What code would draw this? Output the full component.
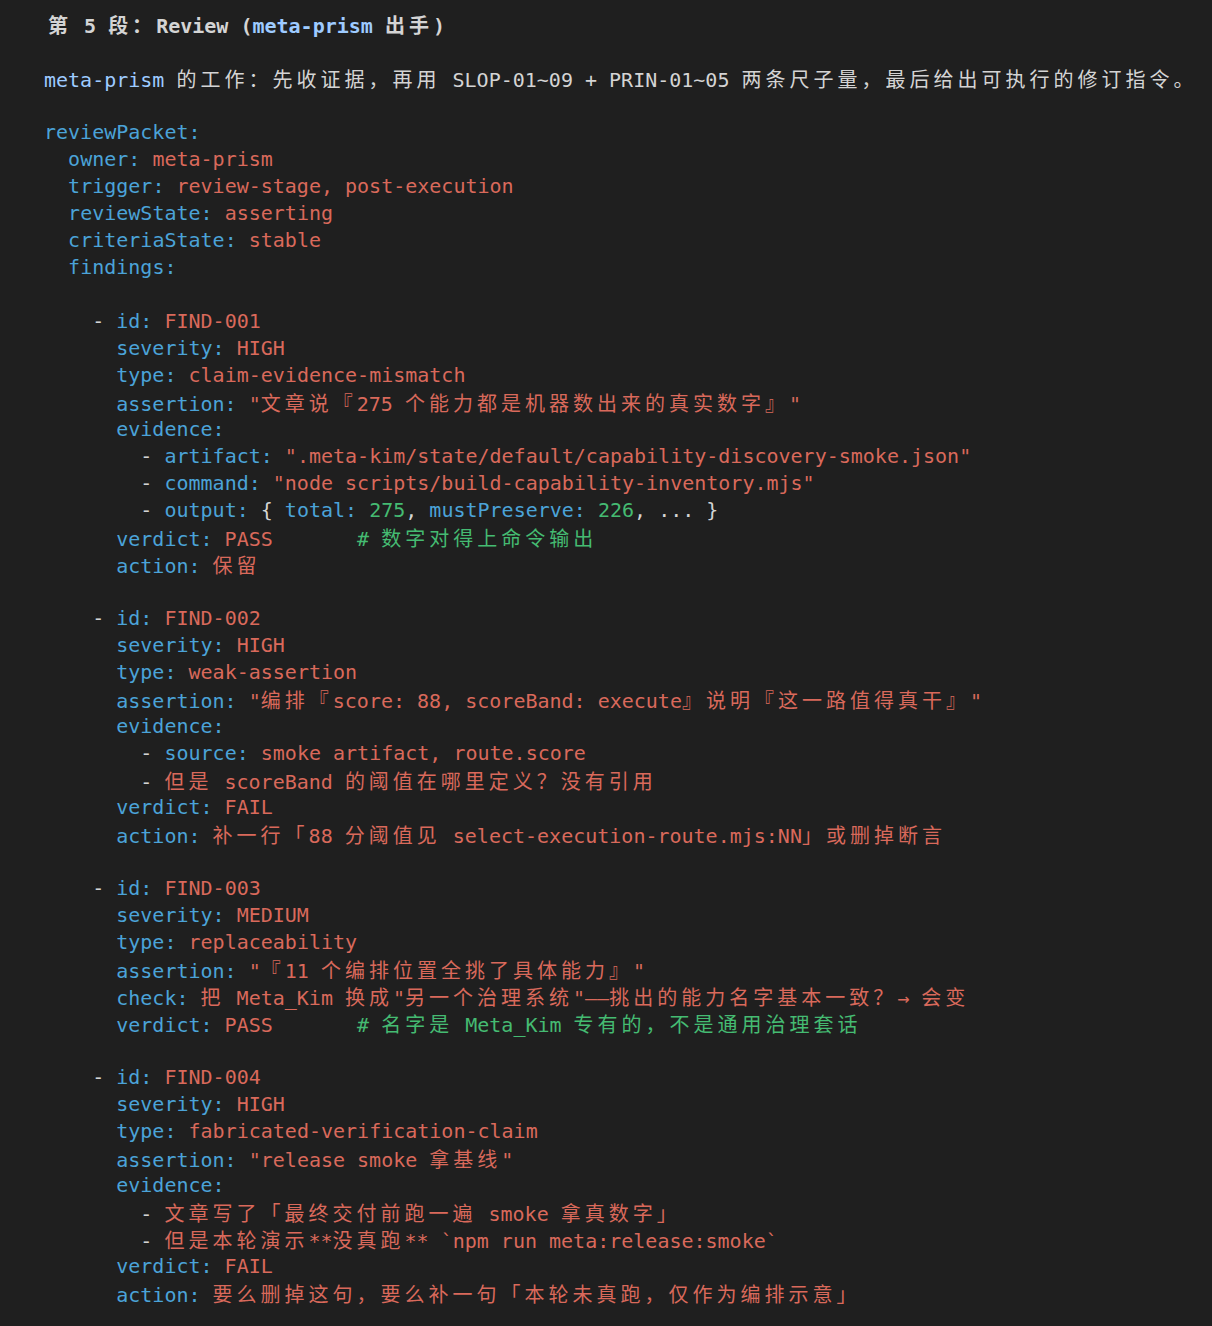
import React from "react";

type Seg = [string, string];

// colour shortcuts for the yaml-ish listing
const K = "text-[#4ba3d8]"; // keys
const V = "text-[#d9695b]"; // values / strings
const G = "text-[#45bb72]"; // numbers & comments
const W = "text-[#d4d4d4]"; // punctuation / plain
const B = "text-[#9ecbff]"; // inline code in prose

const CJK = /([\u2e80-\u9fff\uf900-\ufaff\uff00-\uffef\u3000-\u303f]+)/;

const key = (indent: number, k: string, v: string, dash = false): Seg[] => {
  const out: Seg[] = [[W, " ".repeat(indent)]];
  if (dash) out.push([W, "- "]);
  out.push([K, k + ":"]);
  if (v) out.push([V, " " + v]);
  return out;
};

const lines: Seg[][] = [
  [],
  [],
  [
    [B, "meta-prism"],
    [W, " 的工作：先收证据，再用 SLOP-01~09 + PRIN-01~05 两条尺子量，最后给出可执行的修订指令。"],
  ],
  [],
  key(0, "reviewPacket", ""),
  key(2, "owner", "meta-prism"),
  key(2, "trigger", "review-stage, post-execution"),
  key(2, "reviewState", "asserting"),
  key(2, "criteriaState", "stable"),
  key(2, "findings", ""),
  [],
  // FIND-001
  key(4, "id", "FIND-001", true),
  key(6, "severity", "HIGH"),
  key(6, "type", "claim-evidence-mismatch"),
  key(6, "assertion", "\"文章说『275 个能力都是机器数出来的真实数字』\""),
  key(6, "evidence", ""),
  key(8, "artifact", "\".meta-kim/state/default/capability-discovery-smoke.json\"", true),
  key(8, "command", "\"node scripts/build-capability-inventory.mjs\"", true),
  [
    [W, "        - "],
    [K, "output:"],
    [W, " { "],
    [K, "total:"],
    [G, " 275"],
    [W, ", "],
    [K, "mustPreserve:"],
    [G, " 226"],
    [W, ", ... }"],
  ],
  [...key(6, "verdict", "PASS"), [W, "       "], [G, "# 数字对得上命令输出"]],
  key(6, "action", "保留"),
  [],
  // FIND-002
  key(4, "id", "FIND-002", true),
  key(6, "severity", "HIGH"),
  key(6, "type", "weak-assertion"),
  key(6, "assertion", "\"编排『score: 88, scoreBand: execute』说明『这一路值得真干』\""),
  key(6, "evidence", ""),
  key(8, "source", "smoke artifact, route.score", true),
  [
    [W, "        - "],
    [V, "但是 scoreBand 的阈值在哪里定义？没有引用"],
  ],
  key(6, "verdict", "FAIL"),
  key(6, "action", "补一行「88 分阈值见 select-execution-route.mjs:NN」或删掉断言"),
  [],
  // FIND-003
  key(4, "id", "FIND-003", true),
  key(6, "severity", "MEDIUM"),
  key(6, "type", "replaceability"),
  key(6, "assertion", "\"『11 个编排位置全挑了具体能力』\""),
  key(6, "check", "把 Meta_Kim 换成\"另一个治理系统\"——挑出的能力名字基本一致？→ 会变"),
  [...key(6, "verdict", "PASS"), [W, "       "], [G, "# 名字是 Meta_Kim 专有的，不是通用治理套话"]],
  [],
  // FIND-004
  key(4, "id", "FIND-004", true),
  key(6, "severity", "HIGH"),
  key(6, "type", "fabricated-verification-claim"),
  key(6, "assertion", "\"release smoke 拿基线\""),
  key(6, "evidence", ""),
  [
    [W, "        - "],
    [V, "文章写了「最终交付前跑一遍 smoke 拿真数字」"],
  ],
  [
    [W, "        - "],
    [V, "但是本轮演示**没真跑** `npm run meta:release:smoke`"],
  ],
  key(6, "verdict", "FAIL"),
  key(6, "action", "要么删掉这句，要么补一句「本轮未真跑，仅作为编排示意」"),
];

// CJK glyphs take two mono cells in the reference, so pad them out
const Text = ({ text }: { text: string }) => (
  <>
    {text.split(CJK).map((part, i) =>
      i % 2 === 1 ? (
        <span key={i} className="font-['Noto_Sans_CJK_SC',sans-serif] tracking-[4px]">
          {part}
        </span>
      ) : (
        <React.Fragment key={i}>{part}</React.Fragment>
      )
    )}
  </>
);

const Line = ({ segs }: { segs: Seg[] }) => (
  <div className="h-[27px] whitespace-pre">
    {segs.map(([color, text], i) => (
      <span key={i} className={color}>
        <Text text={text} />
      </span>
    ))}
  </div>
);

export default function App() {
  return (
    <div className="min-h-screen w-[1212px] h-[1326px] overflow-hidden bg-[#1f1f1f] pl-[44px] pt-[11px] font-['DejaVu_Sans_Mono','Noto_Sans_CJK_SC',monospace] text-[20px] leading-[27px] text-[#d4d4d4]">
      {/* heading */}
      <div className="h-[27px] whitespace-pre pl-[4px] font-bold">
        <Text text="第 5 段：Review (" />
        <span className={B}>meta-prism</span>
        <Text text=" 出手)" />
      </div>
      {lines.slice(1).map((segs, i) => (
        <Line key={i} segs={segs} />
      ))}
    </div>
  );
}
